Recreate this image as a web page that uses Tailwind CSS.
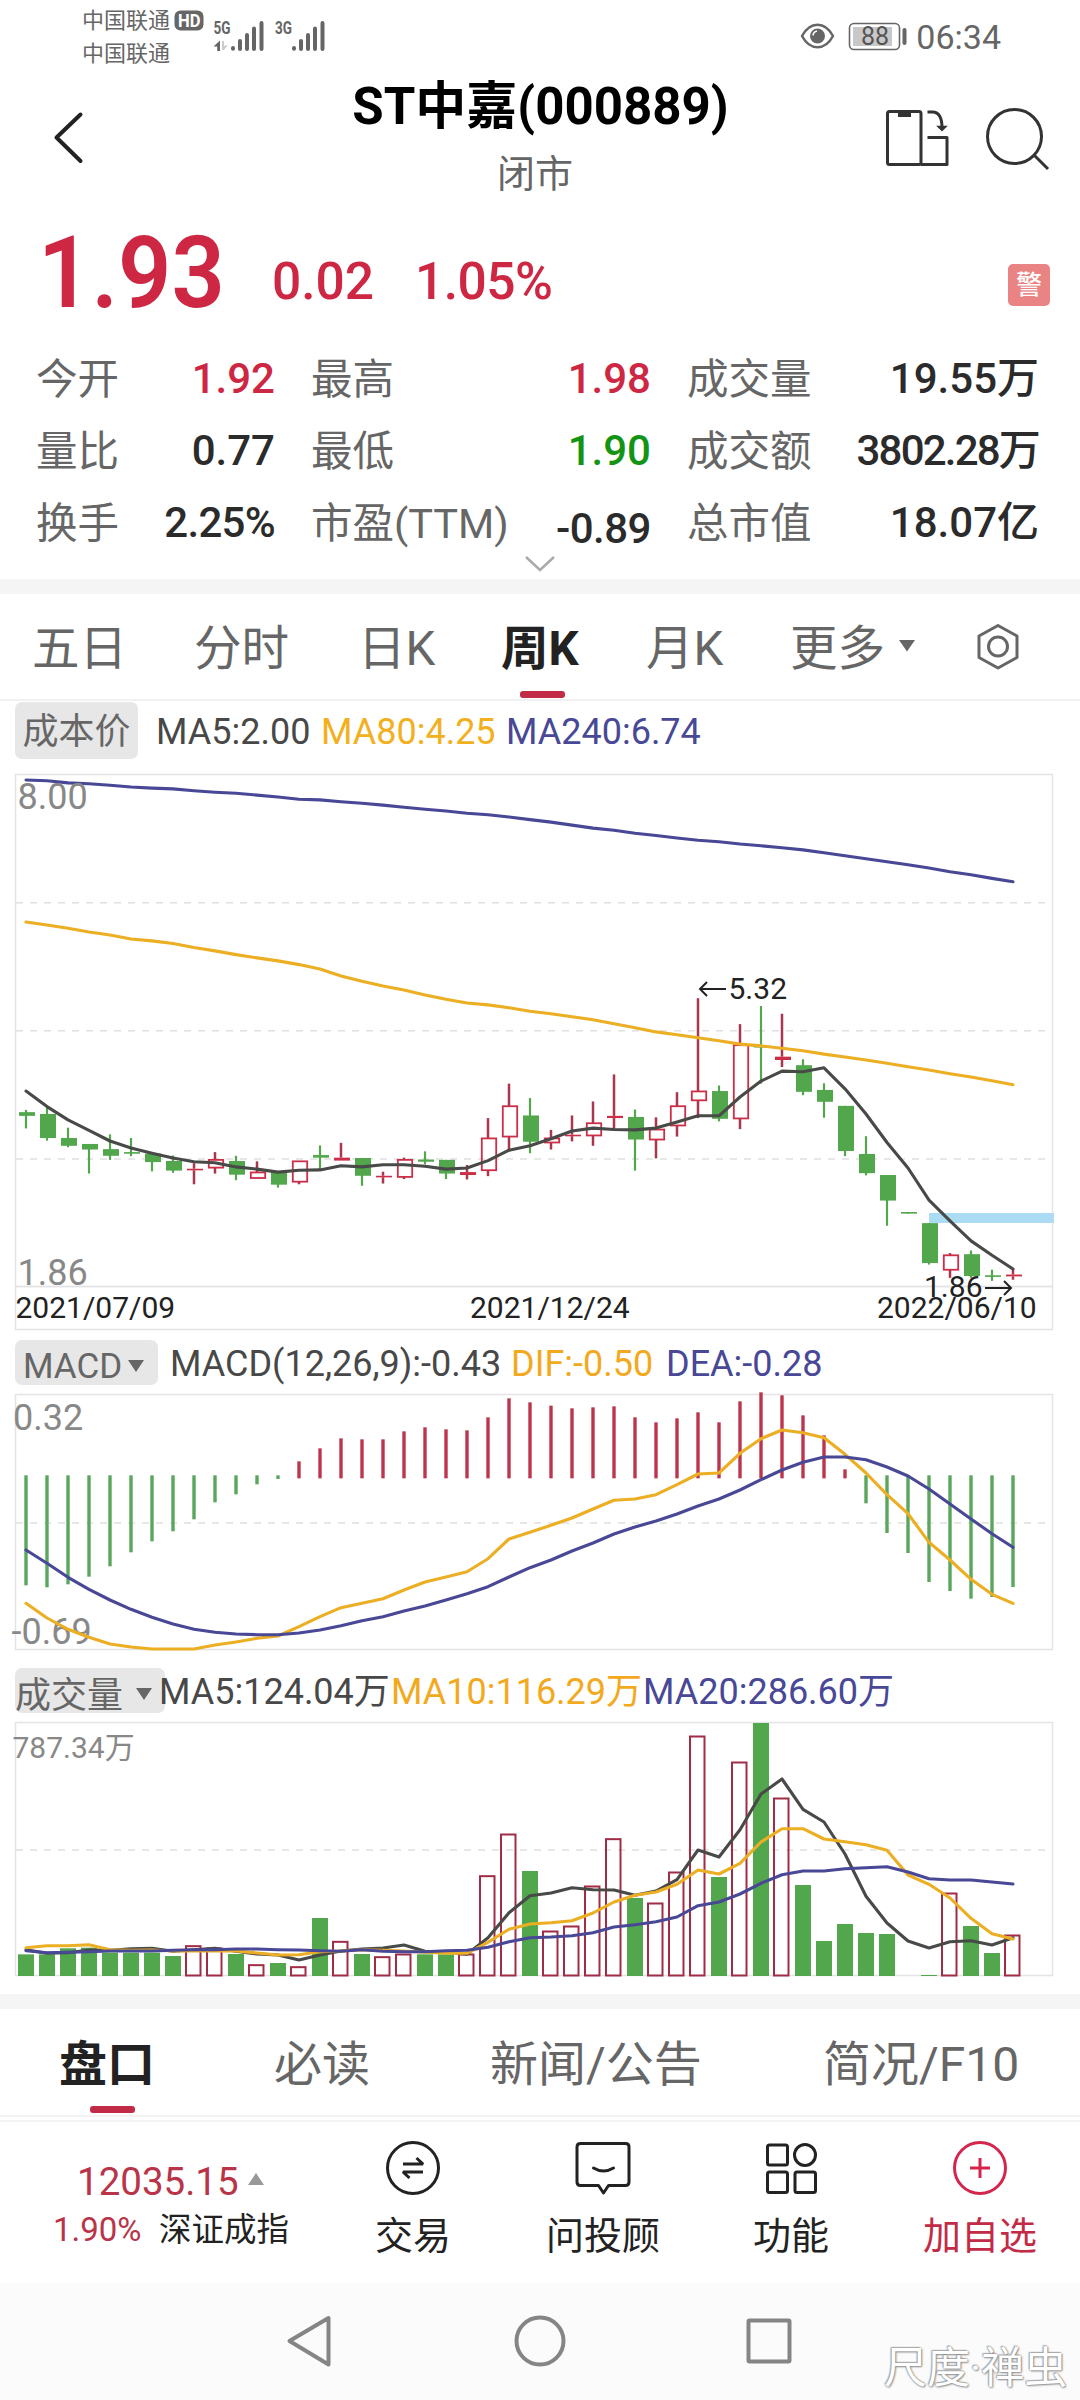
<!DOCTYPE html>
<html lang="zh-CN">
<head>
<meta charset="utf-8">
<title>ST中嘉(000889)</title>
<script src="https://cdn.jsdelivr.net/npm/@tailwindcss/browser@4"></script>
</head>
<body class="w-[1080px] h-[2400px] overflow-hidden bg-white font-['Roboto','Noto_Sans_CJK_SC',sans-serif] text-[#2b2b2b] whitespace-nowrap">

<!-- status bar -->
<div class="h-[72px] flex items-start text-[#666]">
  <div class="ml-[82px] w-[92px] text-[22px] leading-[33px] pt-[4px]"><div>中国联通</div><div>中国联通</div></div>
  <svg class="w-[160px] h-[72px]" viewBox="174 0 160 72" fill="#666">
    <rect x="174.500" y="10.500" width="29" height="20" rx="6"/>
    <text x="178" y="27" font-size="18" font-weight="700" fill="#fff" textLength="22.500" lengthAdjust="spacingAndGlyphs">HD</text>
    <text x="213.500" y="34" font-size="18" font-weight="700" textLength="17" lengthAdjust="spacingAndGlyphs">5G</text>
    <text x="275" y="34" font-size="18" font-weight="700" textLength="17" lengthAdjust="spacingAndGlyphs">3G</text>
    <path d="M213.500 46.500l6.500-6v10.500h-2.800v-4.500z"/><path d="M222 41h2v5l4-1-4 5h-2z" fill="#ccc"/>
    <g stroke="#666" stroke-width="4" stroke-linecap="round"><path d="M233 48v.8M240 41v8M247 35v14M254 28.500v20.500M261.500 23v26M294 48v.8M301 41v8M308 35v14M315 28.500v20.500M322.500 23v26"/></g>
  </svg>
  <svg class="ml-auto w-[110px] h-[72px]" viewBox="798 0 110 72" fill="none" stroke="#666" stroke-width="2.500">
    <path d="M802 36c8-15 23-15 31 0-8 15-23 15-31 0z" stroke-linejoin="round"/><circle cx="817.500" cy="36" r="7.500" fill="#666" stroke="none"/><path d="M813 35.500a5 5 0 0 1 4-4.500" stroke="#fff" stroke-width="1.500"/>
    <rect x="849.500" y="23.500" width="50" height="26" rx="4.500" stroke-width="1.600"/><rect x="853" y="27" width="39" height="19" fill="#c8c8c8" stroke="none"/>
    <path d="M904.500 30v13" stroke-width="4" stroke-linecap="round"/>
    <text x="875" y="45" text-anchor="middle" font-size="25" fill="#555" stroke="none">88</text>
  </svg>
  <div class="ml-[8px] mr-[79px] text-[34px] leading-[40px] pt-[17px]">06:34</div>
</div>

<!-- title bar -->
<header class="h-[138px] flex items-start">
  <svg class="ml-[40px] mt-[32px] w-[60px] h-[68px]" viewBox="40 104 60 68" fill="none" stroke="#222" stroke-width="4" stroke-linecap="round" stroke-linejoin="round"><path d="M80.500 114.500L56.500 137.500L80.500 161"/></svg>
  <div class="mx-auto pl-[101px] text-center">
    <h1 class="text-[51px] leading-[60px] mt-[5px] font-bold text-black">ST中嘉(000889)</h1>
    <div class="text-[38px] leading-[44px] mt-[15px] pr-[11px] text-[#666]">闭市</div>
  </div>
  <svg class="mr-[24px] w-[176px] h-[138px]" viewBox="880 72 176 138" fill="none" stroke="#333" stroke-width="3">
    <rect x="887.500" y="111.500" width="33.500" height="53" rx="2"/><path d="M899 112v4h11v-4z" fill="#333" stroke-width="2"/>
    <path d="M921 164.500h26v-27h-19.500" stroke-linejoin="round"/><path d="M927.500 112h6q8.500 1 8.500 16"/><path d="M938 126.500h8l-4 4z" fill="#333" stroke-width="1.500"/>
    <circle cx="1014.500" cy="136.500" r="27"/><path d="M1034 155l14 14"/>
  </svg>
</header>

<!-- price -->
<section class="h-[133px] flex items-start font-medium text-[#cd2743]">
  <div class="ml-[38px] w-[234px] text-[100px] leading-[100px] mt-[13px] origin-left scale-x-[0.935] font-semibold">1.93</div>
  <div class="w-[143px] text-[51.500px] leading-[60px] mt-[42px]">0.02</div>
  <div class="text-[51.500px] leading-[60px] mt-[42px] tracking-[-0.500px]">1.05%</div>
  <div class="ml-auto mr-[30px] mt-[54px] w-[42px] h-[42px] rounded-[5px] bg-[#e98384] text-white text-[26px] leading-[42px] text-center">警</div>
</section>

<section class="h-[216px] ml-[36px] grid grid-cols-[239px_340px_352px] gap-x-[36px] auto-rows-[72px] text-[41.500px] leading-[73px] [&_b]:font-medium [&_b]:text-[42px] [&_b]:-mt-px [&_span]:text-[#666] [&>div]:flex [&>div]:justify-between">
  <div><span>今开</span><b class="text-[#cd2743]">1.92</b></div>
  <div><span>最高</span><b class="text-[#cd2743]">1.98</b></div>
  <div><span>成交量</span><b>19.55万</b></div>
  <div><span>量比</span><b>0.77</b></div>
  <div><span>最低</span><b class="text-[#149414]">1.90</b></div>
  <div><span>成交额</span><b class="tracking-[-1.800px]">3802.28万</b></div>
  <div><span>换手</span><b class="tracking-[-0.700px]">2.25%</b></div>
  <div><span>市盈(TTM)</span><b class="pt-[6px] tracking-[-0.500px]">-0.89</b></div>
  <div><span>总市值</span><b>18.07亿</b></div>
</section>
<div class="h-[20px] flex justify-center"><svg class="w-[40px] h-[20px]" viewBox="520 559 40 20" overflow="visible" fill="none" stroke="#aaa" stroke-width="2.500"><path d="M526 557l14 13 14-13"/></svg></div>
<div class="h-[15px] bg-[#f5f5f5]"></div>

<!-- period tabs -->
<nav class="h-[107px] border-b-2 border-[#f1f1f1] pl-[32px] grid grid-cols-[162px_164px_143px_145px_144px_184px_60px] text-[47.500px] leading-[110px] text-[#666]">
  <div>五日</div><div>分时</div><div>日K</div>
  <div class="font-bold text-[#222] relative">周K<i class="absolute left-[19px] top-[97px] w-[45px] h-[7px] rounded-[3px] bg-[#c22b46]"></i></div>
  <div>月K</div>
  <div class="flex items-start">更多<svg class="ml-[13px] mt-[45px] w-[18px] h-[14px]" viewBox="0 0 18 14" fill="#666"><path d="M1 1h16L9 12.500z"/></svg></div>
  <svg class="mt-[28px] w-[48px] h-[50px]" viewBox="973.500 622 48 50" fill="none" stroke="#666" stroke-width="3" stroke-linejoin="round"><path d="M997.500 625.500l19 10.500v21.500l-19 10.500-19-10.500v-21.500z"/><circle cx="997.500" cy="646.500" r="9.500"/></svg>
</nav>

<div class="h-[59px] pl-[15px] flex items-start text-[36px] text-[#484848] leading-[60px] pt-[1px]">
  <div class="w-[123px] h-[57px] rounded-[7px] bg-[#e7e7e7] text-center text-[#666]">成本价</div>
  <div class="ml-[18px] w-[165px]">MA5:2.00</div><div class="w-[185px] text-[#f2b01e]">MA80:4.25</div><div class="text-[#484896]">MA240:6.74</div>
</div>
<svg id="price" class="block w-[1080px] h-[576px]" viewBox="0 760 1080 576"></svg>

<div class="h-[54px] pl-[15px] flex items-start text-[36px] text-[#484848] leading-[48px] pt-[4px]">
  <div class="w-[143px] h-[45px] rounded-[7px] bg-[#e7e7e7] text-[#666] text-[35px] leading-[54px] pl-[8px] flex items-start">MACD<svg class="ml-[6px] mt-[20px] w-[16px] h-[12px]" viewBox="0 0 16 12" fill="#666"><path d="M0 0h16L8 12z"/></svg></div>
  <div class="ml-[12px] w-[341px]">MACD(12,26,9):-0.43</div><div class="w-[155px] text-[#f2a91e]">DIF:-0.50</div><div class="text-[#484896]">DEA:-0.28</div>
</div>
<svg id="macd" class="block w-[1080px] h-[270px]" viewBox="0 1390 1080 270"></svg>

<div class="h-[60px] pl-[15px] flex items-start text-[36px] text-[#484848] leading-[48px] pt-[8px]">
  <div class="w-[150px] h-[45px] rounded-[7px] bg-[#e7e7e7] text-[#666] leading-[56px] flex items-start">成交量<svg class="ml-[13px] mt-[20px] w-[16px] h-[12px]" viewBox="0 0 16 12" fill="#666"><path d="M0 0h16L8 12z"/></svg></div>
  <div class="-ml-[6px] w-[232px]">MA5:124.04万</div><div class="w-[252px] text-[#f2a91e]">MA10:116.29万</div><div class="text-[#484896]">MA20:286.60万</div>
</div>
<svg id="volume" class="block w-[1080px] h-[274px]" viewBox="0 1720 1080 274"></svg>

<div class="h-[15px] bg-[#f5f5f5]"></div>
<!-- content tabs -->
<nav class="h-[108px] border-b-2 border-[#f3f3f3] pl-[59px] grid grid-cols-[215px_216px_333px_220px] text-[48px] leading-[111px] text-[#666]">
  <div class="font-bold text-[#222] relative">盘口<i class="absolute left-[31px] top-[97px] w-[45px] h-[7px] rounded-[3px] bg-[#c22b46]"></i></div>
  <div>必读</div><div>新闻/公告</div><div>简况/F10</div>
</nav>

<!-- bottom actions -->
<nav class="mt-[3px] h-[163px] border-t-2 border-[#f3f3f3] flex items-start text-[38px] text-[#222] text-center">
  <div class="w-[344px] pt-[38px]">
    <div class="flex pl-[77px] text-[38.500px] leading-[44px] text-[#b93449]">12035.15<svg class="ml-[8px] mt-[12px] w-[18px] h-[14px]" viewBox="0 0 18 14" fill="#999"><path d="M1 13L9 1l8 12z"/></svg></div>
    <div class="flex pl-[53px] text-[33px] leading-[44px] mt-[4px]"><span class="w-[106px] text-left text-[#b93449]">1.90%</span><span class="text-[32.500px]">深证成指</span></div>
  </div>
  <div class="w-[138px] pt-[16px]"><svg class="mx-auto w-[60px] h-[60px]" viewBox="383 2138.500 60 60" fill="none" stroke="#222" stroke-width="3"><circle cx="413" cy="2168.500" r="25.500"/><path d="M403 2164.500h20l-6.500-6M423 2172.500h-20l6.500 6" stroke-linejoin="bevel"/></svg><div class="leading-[56px] mt-[10px]">交易</div></div>
  <div class="w-[242px] pt-[16px]"><svg class="mx-auto w-[60px] h-[60px]" viewBox="572.500 2138.500 60 60" fill="none" stroke="#222" stroke-width="3" stroke-linejoin="round" stroke-linecap="round"><path d="M580 2144h45q3.500 0 3.500 3.500v35q0 3.500-3.500 3.500h-17l-5 7.500-5-7.500h-18q-3.500 0-3.500-3.500v-35q0-3.500 3.500-3.500z"/><path d="M593 2168.500q10 6 20 0"/></svg><div class="leading-[56px] mt-[10px]">问投顾</div></div>
  <div class="w-[134px] pt-[16px]"><svg class="mx-auto w-[60px] h-[60px]" viewBox="762 2138.500 60 60" fill="none" stroke="#222" stroke-width="3"><rect x="768.500" y="2145.500" width="20" height="20" rx="2"/><circle cx="806" cy="2155.500" r="10.500"/><rect x="768.500" y="2172.500" width="20" height="20.500" rx="2"/><rect x="796" y="2172.500" width="20.500" height="20.500" rx="2"/></svg><div class="leading-[56px] mt-[10px]">功能</div></div>
  <div class="w-[222px] pt-[16px] pl-[22px] text-[#c22b46]"><svg class="mx-auto w-[60px] h-[60px]" viewBox="950 2138.500 60 60" fill="none" stroke="#d4254c" stroke-width="3"><circle cx="980" cy="2168.500" r="25.500"/><path d="M970 2168.500h20M980 2158.500v20"/></svg><div class="leading-[56px] mt-[10px]">加自选</div></div>
</nav>

<!-- system navigation -->
<div class="h-[117px] bg-[#fbfbfb] relative">
  <svg class="block w-[1080px] h-[117px]" viewBox="0 2283 1080 117" fill="none" stroke="#858585" stroke-width="4" stroke-linejoin="round"><path d="M328.500 2318v46.500L289.500 2341z"/><circle cx="540" cy="2341" r="23.500"/><rect x="748.500" y="2320.500" width="41" height="41" rx="1"/></svg>
  <div class="absolute left-[884px] top-[58px] text-[43px] leading-[54px] text-white [text-shadow:0_0_2px_#777,1px_1px_2px_#999,-1px_-1px_1px_#bbb]">尺度·禅虫</div>
</div>

<script>
const GREEN = '#52a64c', RED = '#cc2e48', DARK = '#484a47', GOLD = '#ecae22', BLUE = '#484896';
const x = i => 26 + i * 21;
const rect = (X, Y, w, h, a) => `<rect x="${X}" y="${Y}" width="${w}" height="${h}" ${a}/>`;
const seg = (x1, y1, x2, y2, a) => `<path d="M${x1} ${y1}L${x2} ${y2}" ${a}/>`;
const curve = (v, y, c) => `<polyline points="${v.map((p, i) => x(i) + ',' + y(p).toFixed(1)).join(' ')}" fill="none" stroke="${c}" stroke-width="3.100" stroke-linejoin="round" stroke-linecap="round"/>`;
const dash = Y => seg(16, Y, 1052, Y, 'stroke="#e0e0e0" stroke-width="1.500" stroke-dasharray="7 7"');
const frame = (t, b) => rect(15.5, t, 1037, b - t, 'fill="none" stroke="#e4e4e6" stroke-width="1.500"');
const text = (X, Y, s, t, c) => `<text x="${X}" y="${Y}" font-size="${s}" fill="${c}">${t}</text>`;

// price: kind, high, body top, body bottom, low
const py = v => 760 + v / 2.7034;
const candles = [
['g',946,952,962,996],['g',940,957,1022,1029],['g',994,1022,1043,1047],['g',1038,1038,1053,1118],['g',1012,1052,1070,1081],['g',1022,1060,1064,1071],
['g',1060,1064,1087,1112],['g',1069,1084,1110,1116],['r',1090,1105,1109,1147],['r',1060,1081,1102,1118],['g',1070,1084,1121,1136],['r',1085,1115,1130,1130],
['g',1112,1112,1148,1156],['r',1085,1085,1140,1147],['g',1042,1068,1075,1107],['r',1035,1075,1083,1083],['g',1076,1076,1124,1151],['r',1113,1124,1128,1145],
['r',1075,1081,1127,1133],['g',1058,1080,1086,1093],['g',1081,1081,1118,1133],['r',1095,1114,1122,1134],['r',968,1023,1109,1125],['r',875,936,1018,1058],
['g',914,961,1032,1063],['r',1000,1023,1034,1053],['r',961,1013,1017,1031],['r',923,982,1015,1043],['r',850,962,968,997],['g',945,965,1026,1110],
['r',966,999,1026,1077],['r',898,936,988,1018],['r',644,896,920,968],['g',880,895,970,977],['r',714,771,969,998],['g',665,773,777,875],
['r',686,802,811,830],['g',809,825,897,906],['g',874,892,924,967],['g',935,935,1057,1071],['g',1017,1065,1117,1123],['g',1122,1122,1191,1259],
['g',1222,1222,1226,1226],['g',1252,1252,1360,1364],['r',1333,1339,1378,1400],['g',1326,1336,1395,1400],['g',1378,1393,1397,1408],['r',1375,1391,1396,1405]];
let s = frame(774.5, 1286.5) + frame(1286.5, 1329.5) + dash(902.8) + dash(1030.8) + dash(1159);
s += rect(929, 1213, 125, 10, 'fill="#abdcf4"');
candles.forEach(([k, h, t, b, l], i) => {
  const X = x(i), H = py(h), T = py(t), B = py(b), L = py(l);
  if (k === 'g') {
    s += seg(X, H, X, L, `stroke="${GREEN}" stroke-width="2.200"`) + rect(X - 7, T, 16, Math.max(B - T, 1.6), `fill="${GREEN}"`);
  } else {
    const wick = `stroke="#a8364c" stroke-width="2.500"`;
    s += seg(X, H, X, T, wick) + seg(X, B, X, L, wick);
    s += B - T < 3.5 ? rect(X - 7, T, 16, Math.max(B - T, 1.6), `fill="${RED}"`)
                     : rect(X - 6.2, T, 14.4, B - T, `fill="none" stroke="${RED}" stroke-width="1.800"`);
  }
});
s += curve([895,937,973,1001,1030,1049,1063,1076,1086,1089,1100,1106,1114,1109,1108,1097,1100,1094,1094,1098,1106,1103,1083,1055,1043,1024,1003,995,999,1000,995,979,962,962,911,868,841,843,832,889,957,1034,1103,1190,1246,1300,1339,1376], py, DARK);
s += curve([438,446,455,465,473,484,489,496,507,516,526,535,543,553,565,584,598,611,622,635,647,657,662,670,679,686,694,702,713,724,735,743,751,759,768,773,779,786,795,803,811,820,829,838,848,857,867,878], py, GOLD);
s += curve([54,56,62,64,68,73,76,78,83,87,90,95,100,106,108,113,117,122,128,133,138,144,148,154,161,168,176,184,190,198,204,211,217,221,227,232,237,243,251,259,267,275,283,292,302,310,320,329], py, BLUE);
s += text(17.5, 809, 36, '8.00', '#888') + text(17.5, 1284.5, 36, '1.86', '#888');
s += text(15.5, 1318, 30, '2021/07/09', '#222') + text(470, 1318, 30, '2021/12/24', '#222') + text(877, 1318, 30, '2022/06/10', '#222');
s += text(728.5, 998.5, 30, '5.32', '#222') + text(924, 1297, 30, '1.86', '#222');
s += `<path d="M726 989h-25M707 982l-7 7 7 7M985 1288h25M1004 1281l7 7-7 7" fill="none" stroke="#222" stroke-width="2"/>`;
document.getElementById('price').innerHTML = s;

// MACD
const my = v => 1330 + v / 3;
const hist = [766,772,763,740,709,667,634,604,568,517,493,463,447,394,355,325,328,328,304,292,298,301,262,205,217,227,235,232,229,262,277,265,247,277,214,187,196,256,316,418,520,609,669,756,783,806,801,771];
s = frame(1394.5, 1649.5) + dash(1523);
hist.forEach((v, i) => {
  const up = v < 440;
  s += seg(x(i), my(up ? 445 : 436), x(i), my(v), `stroke="${up ? '#bc354c' : '#5aa65c'}" stroke-width="3.400"`);
});
s += text(13, 1430, 36, '0.32', '#888') + text(11.5, 1643.5, 36, '-0.69', '#888');
s += curve([820,864,898,922,942,951,957,957,957,945,936,925,918,890,860,833,820,806,780,756,741,725,686,627,607,586,564,537,511,507,494,464,432,429,370,326,300,308,323,373,429,494,551,637,690,748,793,820], my, GOLD);
s += curve([660,700,742,778,810,838,862,882,898,907,912,914,914,909,900,887,872,860,843,828,810,791,770,741,713,690,663,639,612,591,573,552,528,507,480,449,420,397,381,381,389,411,438,477,522,567,611,652], my, BLUE);
document.getElementById('macd').innerHTML = s;

// volume: positive = falling week (solid), negative = rising week (hollow)
const vy = v => 1655 + v / 3;
const vol = [898,898,880,878,893,893,893,903,-872,-879,897,-929,924,-935,789,-859,897,-905,-897,898,898,-897,-662,-537,648,-828,-813,-693,-551,729,-744,-651,-243,666,-321,204,-429,690,858,807,834,837,null,960,-714,813,894,-840];
s = frame(1722.5, 1975.5) + dash(1850);
vol.forEach((v, i) => {
  if (v === null) return;
  const T = vy(Math.abs(v));
  s += v > 0 ? rect(x(i) - 8, T, 16, 1976 - T, `fill="${GREEN}"`)
             : rect(x(i) - 8, T + .5, 14.5, 1975 - T, `fill="none" stroke="#a02c46" stroke-width="2"`);
});
s += text(12.5, 1757.5, 30, '787.34万', '#888');
s += curve([884,895,893,885,886,881,880,889,884,880,889,897,900,915,900,888,882,879,870,889,890,898,848,773,722,714,698,704,705,721,708,674,585,606,524,417,372,463,501,597,724,804,858,879,860,857,870,848], vy, DARK);
s += curve([878,872,872,869,884,886,885,888,888,888,888,894,900,899,890,888,884,886,888,892,895,895,862,823,807,803,797,774,741,721,711,688,645,657,625,561,521,521,552,560,569,586,660,688,729,790,836,852], vy, GOLD);
s += curve([887,893,892,890,888,888,888,886,884,884,882,882,884,885,887,889,884,889,890,890,887,886,877,860,848,846,842,833,816,809,800,786,752,741,717,685,659,648,648,641,638,635,651,671,675,675,681,687], vy, BLUE);
document.getElementById('volume').innerHTML = s;
</script>
</body>
</html>
